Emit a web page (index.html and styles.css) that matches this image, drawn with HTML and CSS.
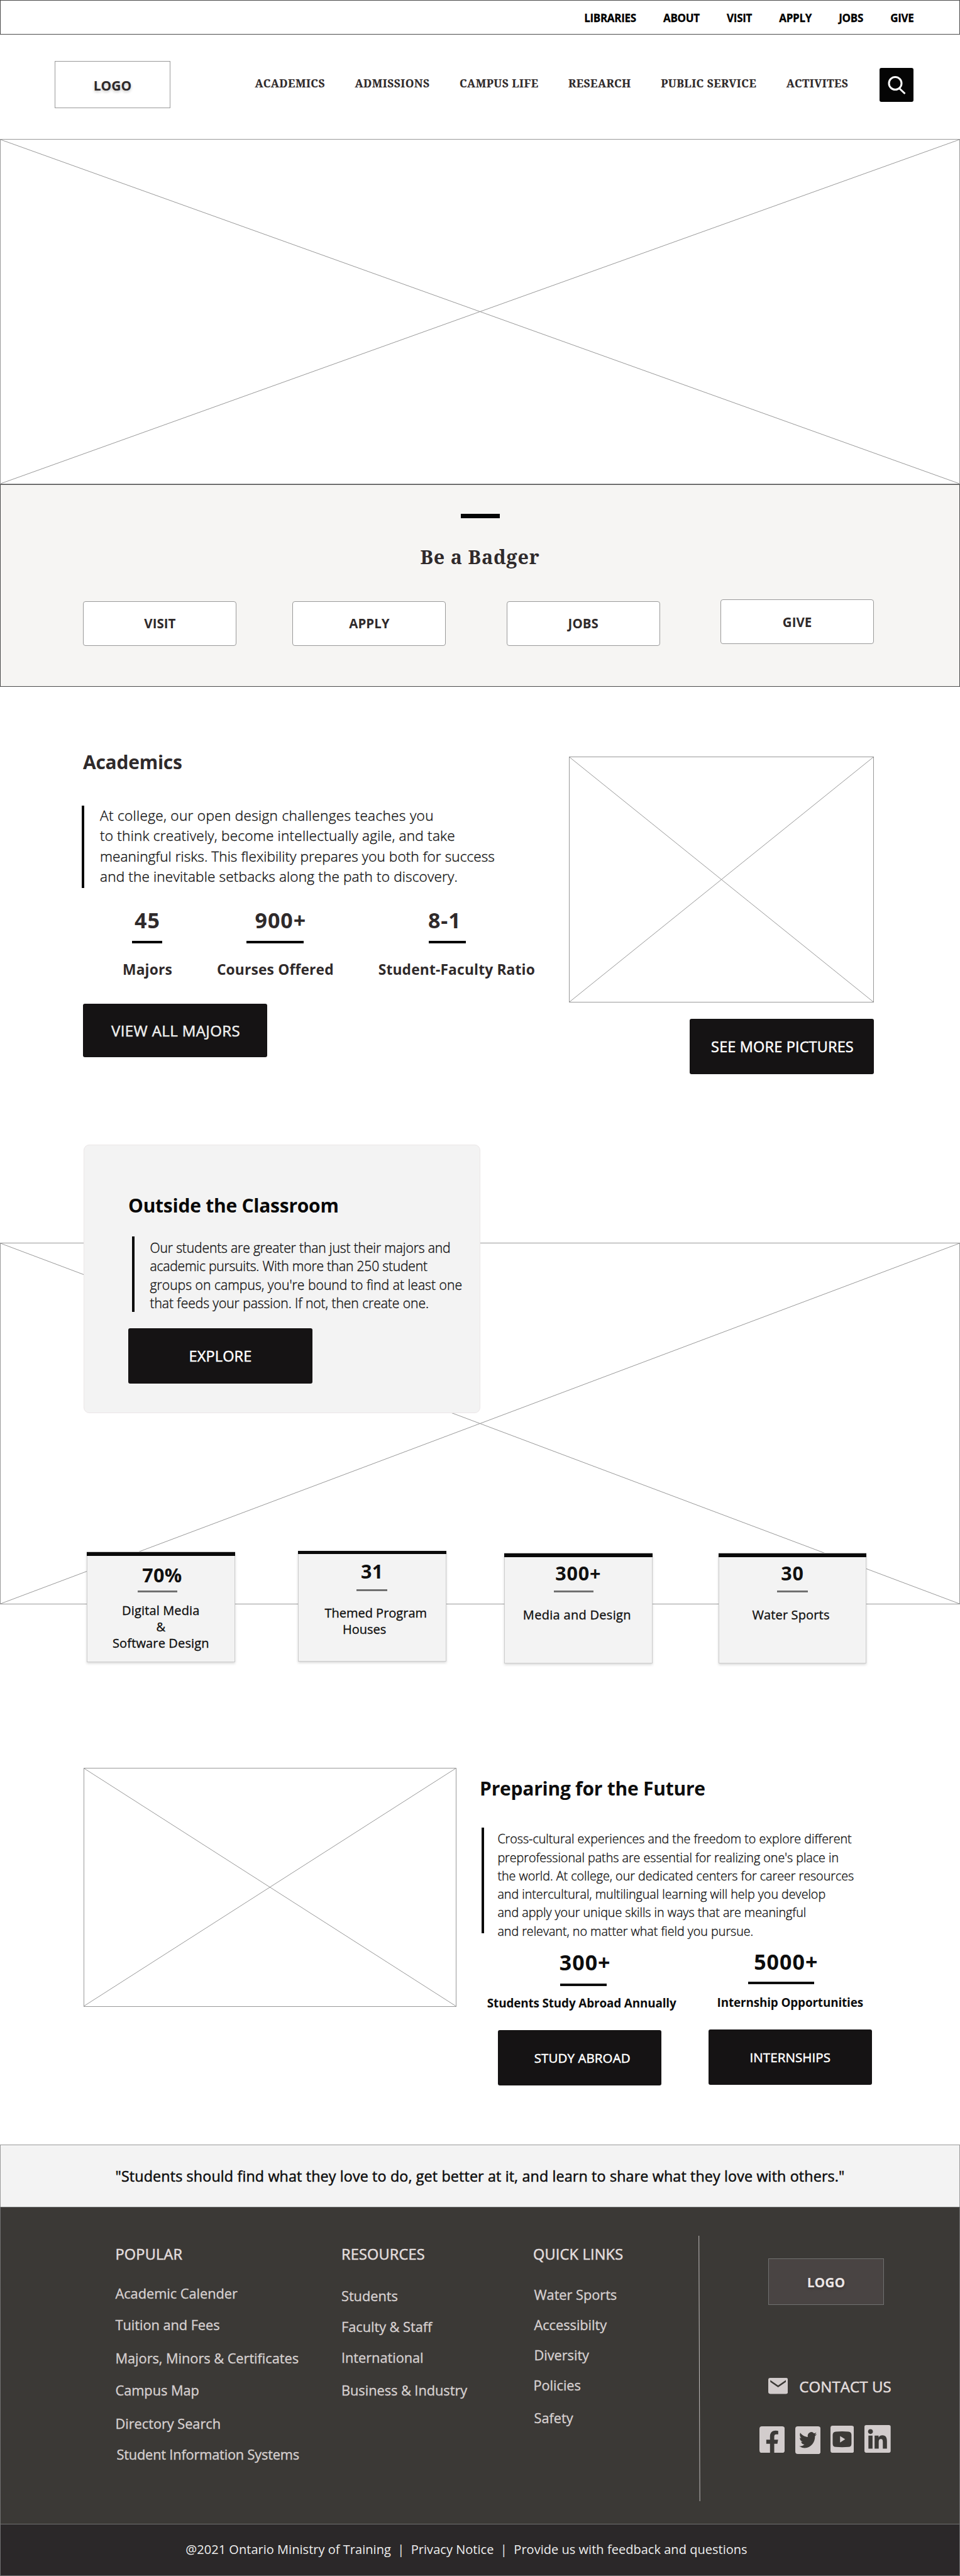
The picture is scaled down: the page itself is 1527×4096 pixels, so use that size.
FILE: index.html
```html
<!DOCTYPE html>
<html lang="en">
<head>
<meta charset="utf-8">
<title>College</title>
<link rel="stylesheet" href="styles.css">
</head>
<body>
<div class="topbar"><a>LIBRARIES</a><a>ABOUT</a><a>VISIT</a><a>APPLY</a><a>JOBS</a><a>GIVE</a></div>
<header class="header">
  <div class="logo"><span>LOGO</span></div>
  <nav class="nav"><a>ACADEMICS</a><a>ADMISSIONS</a><a>CAMPUS LIFE</a><a>RESEARCH</a><a>PUBLIC SERVICE</a><a>ACTIVITES</a></nav>
  <button class="search" aria-label="Search"><svg viewBox="0 0 54 54"><circle cx="25" cy="24.500" r="10"/><path d="M31.500 32.500l9 8.500"/></svg></button>
</header>
<svg class="wire hero" viewBox="0 0 100 100" preserveAspectRatio="none"><path d="M0 0L100 100M100 0L0 100"/></svg>
<section class="badger">
  <i class="dash"></i>
  <h1>Be a Badger</h1>
  <div class="actions"><a>VISIT</a><a>APPLY</a><a>JOBS</a><a>GIVE</a></div>
</section>
<section class="academics">
  <div class="intro">
    <h2>Academics</h2>
    <div class="note"><p><span class="loose-3">At college, our open design challenges teaches you</span><br><span class="loose-2">to think creatively, become intellectually agile, and take</span><br>meaningful risks. This flexibility prepares you both for success<br><span class="loose-1">and the inevitable setbacks along the path to discovery.</span></p></div>
    <div class="stats">
      <div class="stat"><b>45</b><i></i><span>Majors</span></div>
      <div class="stat"><b>900+</b><i></i><span>Courses Offered</span></div>
      <div class="stat"><b>8-1</b><i></i><span>Student-Faculty Ratio</span></div>
    </div>
    <a class="btn">VIEW ALL MAJORS</a>
  </div>
  <div class="media">
    <svg class="wire" viewBox="0 0 100 100" preserveAspectRatio="none"><path d="M0 0L100 100M100 0L0 100"/></svg>
    <a class="btn">SEE MORE PICTURES</a>
  </div>
</section>
<section class="outside">
  <svg class="wire" viewBox="0 0 100 100" preserveAspectRatio="none"><path d="M0 0L100 100M100 0L0 100"/></svg>
  <div class="front">
    <div class="card">
      <h2>Outside the Classroom</h2>
      <div class="note"><p><span class="tight-2">Our students are greater than just their majors and</span><br><span class="tight-3">academic pursuits. With more than 250 student</span><br>groups on campus, you're bound to find at least one<br><span class="tight-1">that feeds your passion. If not, then create one.</span></p></div>
      <a class="btn">EXPLORE</a>
    </div>
    <div class="facts">
      <div class="fact"><b>70%</b><i></i><p>Digital Media<br>&amp;<br>Software Design</p></div>
      <div class="fact houses"><b>31</b><i></i><p>Themed Program</p><p class="second">Houses</p></div>
      <div class="fact design"><b>300+</b><i></i><p>Media and Design</p></div>
      <div class="fact sports"><b>30</b><i></i><p>Water Sports</p></div>
    </div>
  </div>
</section>
<section class="future">
  <svg class="wire" viewBox="0 0 100 100" preserveAspectRatio="none"><path d="M0 0L100 100M100 0L0 100"/></svg>
  <div class="plan">
    <h2>Preparing for the Future</h2>
    <div class="note"><p>Cross-cultural experiences and the freedom to explore different<br>preprofessional paths are essential for realizing one's place in<br>the world. At college, our dedicated centers for career resources<br>and intercultural, multilingual learning will help you develop<br>and apply your unique skills in ways that are meaningful<br>and relevant, no matter what field you pursue.</p></div>
    <div class="paths">
      <div class="path abroad"><b>300+</b><i></i><span>Students Study Abroad Annually</span><a class="btn">STUDY ABROAD</a></div>
      <div class="path intern"><b>5000+</b><i></i><span>Internship Opportunities</span><a class="btn">INTERNSHIPS</a></div>
    </div>
  </div>
</section>
<section class="quote"><p>"Students should find what they love to do, get better at it, and learn to share what they love with others."</p></section>
<footer class="footer">
  <div class="links popular"><h3>POPULAR</h3><a>Academic Calender</a><a>Tuition and Fees</a><a>Majors, Minors &amp; Certificates</a><a>Campus Map</a><a>Directory Search</a><a>Student Information Systems</a></div>
  <div class="links resources"><h3>RESOURCES</h3><a>Students</a><a>Faculty &amp; Staff</a><a>International</a><a>Business &amp; Industry</a></div>
  <div class="links quick"><h3>QUICK LINKS</h3><a>Water Sports</a><a>Accessibilty</a><a>Diversity</a><a>Policies</a><a>Safety</a></div>
  <svg class="rule" viewBox="0 0 3 422"><path d="M.700 0L2.200 422"/></svg>
  <div class="contact">
    <div class="logo dark"><span>LOGO</span></div>
    <div class="mail"><svg viewBox="165 126 144 117"><path fill-rule="evenodd" d="M179 126H295Q309 126 309 140V229Q309 243 295 243H179Q165 243 165 229V140Q165 126 179 126ZM180 142V156L237 195L294 156V142L237 181Z"/></svg><span>CONTACT US</span></div>
    <div class="social">
      <svg class="fb" viewBox="103 479 184 194"><path fill-rule="evenodd" d="M121 479H269Q287 479 287 497V655Q287 673 269 673H211V606H234L239 576H211V556C211 545 214 538 226 538H240V512Q232 510 222 510C197 510 180 524 180 553V576H153V606H180V673H121Q103 673 103 655V497Q103 479 121 479Z"/></svg>
      <svg class="tw" viewBox="364 479 184 202"><rect x="364" y="479" width="184" height="202" rx="18"/><path class="cut" transform="translate(392 507.600) scale(5.375 5.950)" d="M23.953 4.570a10 10 0 01-2.825.775 4.958 4.958 0 002.163-2.723c-.951.555-2.005.959-3.127 1.184a4.920 4.920 0 00-8.384 4.482C7.690 8.095 4.067 6.130 1.640 3.162a4.822 4.822 0 00-.666 2.475c0 1.710.870 3.213 2.188 4.096a4.904 4.904 0 01-2.228-.616v.060a4.923 4.923 0 003.946 4.827 4.996 4.996 0 01-2.212.085 4.936 4.936 0 004.604 3.417 9.867 9.867 0 01-6.102 2.105c-.390 0-.779-.023-1.170-.067a13.995 13.995 0 007.557 2.209c9.053 0 13.998-7.496 13.998-13.985 0-.210 0-.420-.015-.630A9.935 9.935 0 0024 4.590z"/></svg>
      <svg class="yt" viewBox="626 475 171 198"><rect x="626" y="475" width="171" height="198" rx="16"/><path class="cut" d="M665 518Q711 515 757 518Q779 519 779 543V606Q779 630 757 630Q711 633 665 630Q642 630 642 606V543Q642 519 665 518Z"/><path d="M696 551L733 574L696 598Z"/></svg>
      <svg class="in" viewBox="874 472 191 201"><rect x="874" y="472" width="191" height="201" rx="13"/><g class="cut"><circle cx="918" cy="519" r="17.500"/><path d="M903 549H933V644H903ZM948 549H977V562Q986 546 1005 546C1030 546 1038 562 1038 590V644H1008V597C1008 583 1006 574 994 574C981 574 978 583 978 597V644H948Z"/></g></svg>
    </div>
  </div>
</footer>
<div class="legal"><p>@2021 Ontario Ministry of Training &nbsp;|&nbsp; Privacy Notice &nbsp;|&nbsp; Provide us with feedback and questions</p></div>
</body>
</html>
```

FILE: styles.css
```css
* { box-sizing: border-box; margin: 0; padding: 0; }
body { width: 1527px; height: 4096px; background: #fff; color: #2f2a2b; font-family: "Open Sans", "Noto Sans", sans-serif; white-space: nowrap; overflow-x: hidden; }
svg, i { display: block; }

.topbar { height: 55px; border: 1px solid #4a4a4a; display: flex; justify-content: flex-end; align-items: center; gap: 43.200px; padding: 2px 72.500px 0 0; font-size: 17px; font-weight: 700; letter-spacing: -.300px; color: #000; -webkit-text-stroke: .300px; }
.header { height: 166px; display: flex; align-items: flex-start; padding-left: 87px; }
.logo { width: 184px; height: 75px; margin-top: 42px; padding-top: 2px; border: 1px solid #999; display: flex; align-items: center; justify-content: center; font-size: 21px; font-weight: 700; text-shadow: 0 2px 4px rgba(0,0,0,.25); }
.nav { display: flex; gap: 47.500px; margin-left: 134.500px; width: 993.900px; line-height: 30px; padding-top: 62px; font-family: "Noto Serif", "DejaVu Serif", serif; font-size: 17.400px; font-weight: 700; letter-spacing: .450px; -webkit-text-stroke: .200px; }
.search { width: 54px; height: 54.500px; margin-top: 52.500px; border: 0; border-radius: 3px; background: #050505; }
.search svg { width: 54px; fill: none; stroke: #fff; stroke-width: 3; }

.wire { width: 100%; border: 1px solid #999; fill: none; stroke: #8c8c8c; }
.wire path { vector-effect: non-scaling-stroke; stroke-width: .900px; }
.hero { height: 549px; }

.badger { height: 322px; background: #f6f5f3; border: 1px solid #4a4a4a; display: flex; flex-direction: column; align-items: center; }
.dash { width: 62px; height: 6.500px; background: #050505; margin-top: 46.300px; }
h1 { margin-top: 41.500px; font: 700 30.500px/40px "Noto Serif", "DejaVu Serif", serif; letter-spacing: .800px; }
.actions { align-self: stretch; display: flex; align-items: flex-start; padding-left: 131.400px; margin-top: 47.800px; }
.actions a { width: 244px; height: 71px; margin-top: 2.500px; background: #fff; border: 1px solid #999; border-radius: 4px; display: flex; align-items: center; justify-content: center; font-size: 20.500px; font-weight: 700; }
.actions a:nth-child(2) { margin-left: 89px; }
.actions a:nth-child(3) { margin-left: 96.300px; }
.actions a:nth-child(4) { margin: 0 0 0 96.400px; }

h2 { font-size: 30px; line-height: 40px; font-weight: 700; letter-spacing: -.250px; }
.note { border-left: 4.500px solid #0a0a0a; color: #0c0c0c; font-weight: 300; -webkit-text-stroke: .350px; }
.loose-1 { letter-spacing: .160px; }
.loose-2 { letter-spacing: .220px; }
.loose-3 { letter-spacing: .320px; }
.tight-1 { letter-spacing: -.070px; }
.tight-2 { letter-spacing: -.150px; }
.tight-3 { letter-spacing: -.220px; }
.btn { display: flex; align-items: center; justify-content: center; width: 293px; height: 88px; border-radius: 3px; background: #151314; color: #fff; font-size: 23.500px; letter-spacing: .150px; -webkit-text-stroke: .500px; }

.academics { display: flex; height: 727.500px; padding-left: 132px; }
.intro { width: 773px; padding-top: 100px; }
.intro .note { margin: 50px 0 0 -2px; height: 131px; padding-left: 25px; font-size: 22.600px; line-height: 32.550px; letter-spacing: .070px; }
.note p { margin-top: -1.400px; }
.stats { display: flex; padding: 31.500px 0 0 63px; gap: 71px; }
.stat, .path, .fact { display: flex; flex-direction: column; align-items: center; }
.stat b, .path b { font-size: 34px; line-height: 40px; letter-spacing: 1px; }
.stat i { height: 3.500px; width: 48px; background: #050505; margin: 13px 0 27px; }
.stat span { font-size: 22.800px; line-height: 30px; font-weight: 700; letter-spacing: .150px; }
.stat:nth-child(2) b { margin-left: 17px; }
.stat:nth-child(2) i { width: 91px; }
.stat:nth-child(3) b { margin-right: 38px; }
.stat:nth-child(3) i { width: 59px; margin-right: 30px; }
.intro .btn { margin-top: 39.500px; height: 84.500px; padding-left: 2px; color: #eee; font-size: 24px; letter-spacing: .400px; }
.media { width: 485px; padding-top: 110.500px; }
.media .wire { height: 391px; }
.media .btn { margin: 26px 0 0 auto; padding-left: 2px; }

.outside { display: grid; height: 991.500px; }
.outside > * { grid-area: 1 / 1; }
.outside > .wire { height: 575px; margin-top: 156.500px; }
.front { position: relative; }
.card { margin-left: 133px; width: 631px; height: 427px; border: 1.500px solid #ebe6e7; border-radius: 9px; background: #f3f3f3; padding: 76px 0 0 70px; color: #080808; }
.card .note { margin: 29px 0 0 6px; height: 120px; padding-left: 24.500px; font-size: 21.100px; line-height: 29.350px; letter-spacing: .030px; }
.card .note p, .plan .note p { padding-top: 3.500px; margin: 0; }
.card .btn { margin-top: 26.600px; }

.facts { display: flex; align-items: flex-start; margin-top: 219px; padding-left: 138px; }
.fact { width: 235.700px; height: 176.500px; margin-top: 1.300px; background: #f3f3f3; border: 1px solid #ccc; box-shadow: 0 2px 4px rgba(0,0,0,.16); color: #101010; }
.fact::before { content: ""; align-self: stretch; height: 5.300px; flex: none; margin: .500px -1px 0; background: #0a0a0a; }
.fact b { font-size: 30.500px; line-height: 36px; margin: 12.500px 0 0 4px; letter-spacing: .300px; }
.fact i { width: 63px; height: 3.300px; flex: none; background: #707070; margin: 6.700px 11px 15.700px 0; }
.fact p { font-size: 20px; line-height: 26px; text-align: center; letter-spacing: .150px; -webkit-text-stroke: .350px; }
.fact.houses { margin: 0 0 0 100.200px; }
.houses::before { margin-top: -1px; }
.houses b { margin: 9.500px 0 0; }
.houses i { width: 48.500px; margin: 10.500px 0 22.400px; }
.houses p { margin-left: 12px; letter-spacing: 0; }
.houses .second { margin: 0 24px 0 0; }
.fact.design { margin: 3.300px 0 0 92.400px; }
.design b, .sports b { margin: 7.500px 0 0; letter-spacing: .800px; }
.design i { margin: 9.800px 14px 23px 0; }
.design p { margin-right: 4px; letter-spacing: .300px; }
.fact.sports { margin: 3.300px 0 0 105px; }
.sports i { width: 48.500px; margin: 9.800px 0 23px; }
.sports p { margin-right: 5px; }

.future { display: flex; height: 599px; padding-left: 133px; color: #0d0d0d; }
.future .wire { width: 592.600px; height: 379.500px; }
.plan { margin-left: 40px; }
.plan h2 { margin: 13.200px 0 0 -2.500px; }
.plan .note { margin-top: 41.800px; height: 167.700px; padding-left: 21.800px; font-size: 19.700px; line-height: 29.250px; letter-spacing: -.015px; }
.paths { display: flex; align-items: flex-start; padding: 26px 0 0 9.600px; }
.path { width: 300px; }
.path i { height: 4px; width: 74px; background: #0d0d0d; }
.path > span { font-size: 18.900px; font-weight: 700; line-height: 26px; letter-spacing: -.150px; }
.path .btn { width: 260px; margin-top: 30.200px; font-size: 20.500px; letter-spacing: .100px; }
.abroad b { margin-left: 11px; }
.abroad i { margin: 14.700px 0 13.900px 6px; }
.abroad .btn { margin-right: 6px; padding-left: 8px; }
.intern { width: 260px; margin: -.500px 0 0 51.600px; }
.intern b { margin-right: 13px; }
.intern i { width: 105px; margin: 12px 29px 16px 0; }

.quote { height: 98.500px; background: #f3f3f3; border: 1px solid #999; border-bottom: 0; display: flex; align-items: center; justify-content: center; font-size: 23.300px; letter-spacing: .135px; color: #0d0d0d; -webkit-text-stroke: .500px; }

.footer { height: 505.500px; background: #3b3936; border: 1px solid #707070; display: flex; align-items: flex-start; color: #d6d0d0; padding-left: 182.500px; -webkit-text-stroke: .350px; }
.links { display: flex; flex-direction: column; align-items: flex-start; padding-top: 59px; line-height: 30px; font-size: 21.800px; letter-spacing: -.050px; }
.popular { width: 359.500px; }
.resources { width: 305px; }
.quick { width: 262.500px; }
h3 { font-size: 23.500px; font-weight: 400; letter-spacing: .200px; color: #e2dddd; -webkit-text-stroke: .550px; }
.links a { margin-top: 20.500px; }
.popular a:nth-child(2) { margin-top: 33.200px; }
.popular a:nth-child(4) { margin-top: 22.400px; }
.popular a:nth-child(5) { margin-top: 21.500px; }
.popular a:nth-child(6) { margin-top: 23.200px; }
.popular a:nth-child(7) { margin: 18.800px 0 0 2px; letter-spacing: -.200px; }
.resources a { margin-top: 19px; }
.resources a:nth-child(2) { margin-top: 37.800px; }
.resources a:nth-child(5) { margin-top: 21.500px; }
.quick a { margin: 18.200px 0 0 1.500px; }
.quick a:nth-child(2) { margin-top: 35.500px; }
.quick a:nth-child(5) { margin: 17.300px 0 0 .500px; }
.quick a:nth-child(6) { margin-top: 22.400px; }
.rule { width: 3px; height: 422px; margin-top: 45px; fill: none; stroke: #e0dcdc; stroke-width: .800; }
.contact { margin-left: 94.500px; }
.dark { margin: 81px 0 0 14px; height: 74.500px; background: #494443; border-color: #707070; color: #ebe5e5; -webkit-text-stroke: 0; }
.mail { display: flex; align-items: flex-start; gap: 18px; margin: 114.500px 0 0 14px; line-height: 30px; font-size: 24px; letter-spacing: .100px; color: #e2dddd; fill: #d2cccc; -webkit-text-stroke: .550px; }
.mail svg { width: 31.300px; height: 25.400px; margin-top: 1.700px; }
.social { display: flex; align-items: flex-start; gap: 16.500px; margin-top: 46.700px; fill: #d2cccc; }
.fb { width: 40.100px; height: 42.300px; margin-top: 1.400px; }
.tw { width: 40.100px; height: 44px; margin-top: 1.400px; }
.yt { width: 37.300px; height: 43.200px; margin-top: .600px; }
.in { width: 41.700px; height: 44px; }
.social .cut { fill: #3b3936; }

.legal { height: 82px; background: #2b2829; border: 1px solid #707070; border-top: 0; display: flex; align-items: center; justify-content: center; padding: 0 43px 2px 0; color: #eee; font-size: 20px; letter-spacing: .030px; }
```
